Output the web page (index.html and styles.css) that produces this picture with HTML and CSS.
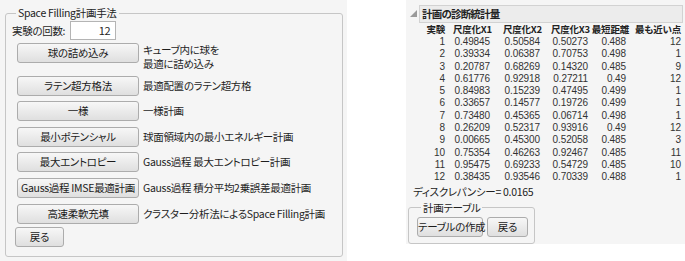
FILE: index.html
```html
<!DOCTYPE html>
<html lang="ja">
<head>
<meta charset="utf-8">
<link rel="stylesheet" href="styles.css">
</head>
<body>
<div class="page">
  <div class="left">
    <fieldset class="group main">
      <legend>Space Filling計画手法</legend>
      <div class="count"><span>実験の回数:</span><span class="input">12</span></div>
      <div class="methods">
        <div class="row"><button class="btn method">球の詰め込み</button><div class="desc">キューブ内に球を<br>最適に詰め込み</div></div>
        <div class="row"><button class="btn method">ラテン超方格法</button><div class="desc one">最適配置のラテン超方格</div></div>
        <div class="row"><button class="btn method">一様</button><div class="desc one">一様計画</div></div>
        <div class="row"><button class="btn method">最小ポテンシャル</button><div class="desc one">球面領域内の最小エネルギー計画</div></div>
        <div class="row"><button class="btn method">最大エントロピー</button><div class="desc one">Gauss過程 最大エントロピー計画</div></div>
        <div class="row"><button class="btn method">Gauss過程 IMSE最適計画</button><div class="desc one">Gauss過程 積分平均2乗誤差最適計画</div></div>
        <div class="row"><button class="btn method">高速柔軟充填</button><div class="desc one">クラスター分析法によるSpace Filling計画</div></div>
      </div>
      <button class="btn back">戻る</button>
    </fieldset>
  </div>
  <div class="right">
    <div class="outline-head">
      <svg class="tri" width="7" height="7" viewBox="0 0 7 7"><polygon points="7,0 7,7 0,7" fill="#9a9a9a"/></svg>
      <div class="title">計画の診断統計量</div>
    </div>
    <table class="stats">
      <colgroup>
        <col class="c1"><col class="c2"><col class="c3"><col class="c4"><col class="c5"><col class="c6">
      </colgroup>
      <thead>
        <tr><th>実験</th><th>尺度化X1</th><th>尺度化X2</th><th>尺度化X3</th><th>最短距離</th><th>最も近い点</th></tr>
      </thead>
      <tbody>
        <tr><td>1</td><td>0.49845</td><td>0.50584</td><td>0.50273</td><td>0.488</td><td>12</td></tr>
        <tr><td>2</td><td>0.39334</td><td>0.06387</td><td>0.70753</td><td>0.498</td><td>1</td></tr>
        <tr><td>3</td><td>0.20787</td><td>0.68269</td><td>0.14320</td><td>0.485</td><td>9</td></tr>
        <tr><td>4</td><td>0.61776</td><td>0.92918</td><td>0.27211</td><td>0.49</td><td>12</td></tr>
        <tr><td>5</td><td>0.84983</td><td>0.15239</td><td>0.47495</td><td>0.499</td><td>1</td></tr>
        <tr><td>6</td><td>0.33657</td><td>0.14577</td><td>0.19726</td><td>0.499</td><td>1</td></tr>
        <tr><td>7</td><td>0.73480</td><td>0.45365</td><td>0.06714</td><td>0.498</td><td>1</td></tr>
        <tr><td>8</td><td>0.26209</td><td>0.52317</td><td>0.93916</td><td>0.49</td><td>12</td></tr>
        <tr><td>9</td><td>0.00665</td><td>0.45300</td><td>0.52058</td><td>0.485</td><td>3</td></tr>
        <tr><td>10</td><td>0.75354</td><td>0.46263</td><td>0.92467</td><td>0.485</td><td>11</td></tr>
        <tr><td>11</td><td>0.95475</td><td>0.69233</td><td>0.54729</td><td>0.485</td><td>10</td></tr>
        <tr><td>12</td><td>0.38435</td><td>0.93546</td><td>0.70339</td><td>0.488</td><td>1</td></tr>
      </tbody>
    </table>
    <div class="disc">ディスクレパンシー= 0.0165</div>
    <fieldset class="group table-group">
      <legend>計画テーブル</legend>
      <div class="tbtns">
        <button class="btn make">テーブルの作成</button>
        <button class="btn back2">戻る</button>
      </div>
    </fieldset>
  </div>
</div>
</body>
</html>
```
FILE: styles.css
```css
* { box-sizing: border-box; }
html, body { margin: 0; padding: 0; background: #ffffff; }
body {
  font-family: "Noto Sans CJK JP", "Noto Sans", sans-serif;
  font-size: 10.5px;
  letter-spacing: -0.3px;
  color: #1e1e1e;
  font-feature-settings: "palt";
}
.page { display: flex; width: 685px; height: 261px; }

.left {
  width: 347px;
  height: 261px;
  background: #f5f5f5;
  padding: 6px 0 0 5px;
}
.group {
  margin: 0;
  border: 1px solid #c6c6c6;
  border-radius: 3px;
  min-width: 0;
}
.group legend {
  padding: 0 2px;
  margin-left: 4px;
  line-height: 14px;
  font-size: 10.5px;
  color: #222;
}
.main {
  width: 338px;
  height: 251px;
  padding: 0 0 0 6px;
}
.count {
  display: flex;
  align-items: center;
  margin-top: 1px;
  height: 19px;
}
.input {
  margin-left: 5px;
  width: 46px;
  height: 19px;
  background: #fff;
  border: 1px solid #b4b4b4;
  text-align: right;
  padding-right: 5px;
  line-height: 17px;
  font-size: 11px;
}
.methods {
  margin: 3px 0 0 5px;
  display: flex;
  flex-direction: column;
  gap: 5.6px;
}
.row { display: flex; align-items: flex-start; }
.btn {
  font-family: inherit;
  font-size: 10.5px;
  letter-spacing: -0.3px;
  font-feature-settings: "palt";
  color: #1a1a1a;
  background: linear-gradient(#f7f7f7, #dfdfdf);
  border: 1px solid #acacac;
  border-radius: 3px;
  height: 20px;
  padding: 0;
  margin: 0;
  line-height: 18px;
  white-space: nowrap;
}
.method { width: 122px; flex: none; }
.desc {
  margin-left: 4px;
  line-height: 13.5px;
  color: #1e1e1e;
  white-space: nowrap;
}
.desc.one { line-height: 20px; }
.back {
  display: block;
  width: 49px;
  margin: 3px 0 0 3px;
}

.right {
  margin-left: 59px;
  width: 279px;
  height: 244px;
  background: #f5f5f5;
  padding-top: 5px;
}
.outline-head {
  display: flex;
  align-items: flex-start;
  height: 18px;
}
.tri { margin: 5px 0 0 4px; flex: none; }
.title {
  margin-left: 2px;
  width: 264px;
  height: 18px;
  background: #ececec;
  border: 1px solid #d2d2d2;
  font-weight: bold;
  font-size: 10.5px;
  letter-spacing: -0.8px;
  line-height: 16px;
  padding-left: 2px;
  color: #222;
}
.stats {
  border-collapse: collapse;
  table-layout: fixed;
  width: 256px;
  margin-left: 19px;
  margin-top: 0;
  white-space: nowrap;
}
.c1 { width: 20px; }
.c2 { width: 47px; }
.c3 { width: 50px; }
.c4 { width: 48px; }
.c5 { width: 39px; }
.c6 { width: 52px; }
.stats th {
  font-weight: bold;
  font-size: 9.5px;
  letter-spacing: -0.2px;
  text-align: right;
  line-height: 13px;
  height: 13px;
  padding: 0;
  color: #222;
}
.stats td {
  text-align: right;
  font-family: "Liberation Sans", Arial, sans-serif;
  font-size: 10px;
  letter-spacing: -0.1px;
  line-height: 12.3px;
  height: 12.3px;
  padding: 0 2px 0 0;
  color: #333;
}
.stats td:first-child { padding-right: 0; }
.stats td:nth-child(5) { padding-right: 3px; }
.stats td:last-child { padding-right: 0; }
.disc {
  margin: 1px 0 0 7px;
  line-height: 14px;
  color: #222;
}
.table-group {
  margin: 2px 0 0 2px;
  width: 127px;
  height: 43px;
  padding: 0 0 0 8px;
}
.tbtns { display: flex; gap: 4px; margin-top: 2px; }
.make { width: 66px; }
.back2 { width: 41px; }
```
